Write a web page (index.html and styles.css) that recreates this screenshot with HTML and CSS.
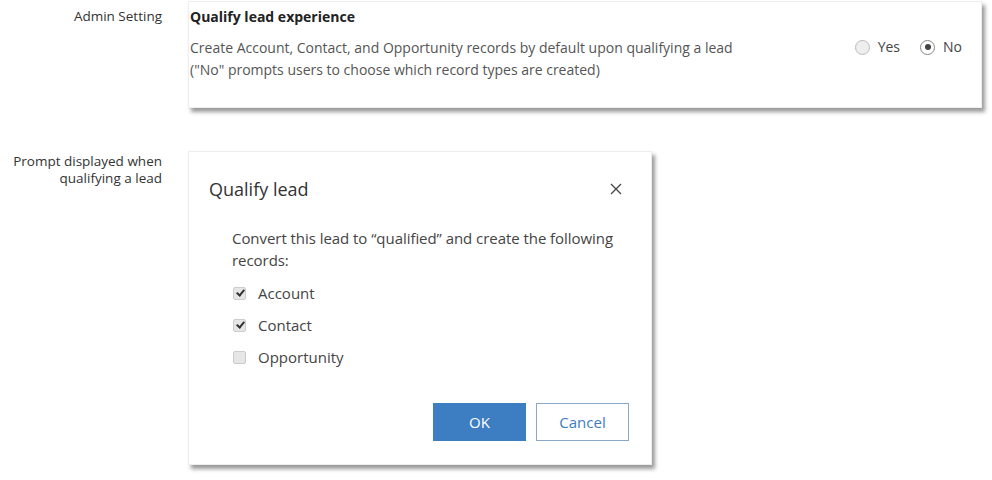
FILE: index.html
```html
<!DOCTYPE html>
<html lang="en">
  <head>
    <meta charset="UTF-8" />
    <title>Qualify lead experience</title>
    <link rel="stylesheet" href="styles.css">
  </head>
  <body>
    <div class="row row-setting">
      <div class="side-label">Admin Setting</div>
      <div class="card setting-card">
        <h3 class="setting-title">Qualify lead experience</h3>
        <div class="setting-body">
          <p class="setting-text">
            Create Account, Contact, and Opportunity records by default upon qualifying a lead<br />
            ("No" prompts users to choose which record types are created)
          </p>
          <div class="radios">
            <label class="radio"><span class="dot"></span>Yes</label>
            <label class="radio on"><span class="dot"></span>No</label>
          </div>
        </div>
      </div>
    </div>

    <div class="row row-prompt">
      <div class="side-label">
        <div>Prompt displayed when</div>
        <div>qualifying a lead</div>
      </div>
      <div class="card dialog">
        <div class="dialog-head">
          <h2 class="dialog-title">Qualify lead</h2>
          <svg class="close" width="12" height="12" viewBox="0 0 12 12">
            <path d="M1 1 L11 11 M11 1 L1 11" stroke="#444" stroke-width="1.3" fill="none" />
          </svg>
        </div>
        <div class="dialog-body">
          <p class="dialog-text">Convert this lead to “qualified” and create the following records:</p>
          <label class="check on"><span class="box"></span>Account</label>
          <label class="check on"><span class="box"></span>Contact</label>
          <label class="check"><span class="box"></span>Opportunity</label>
        </div>
        <div class="dialog-foot">
          <button class="btn btn-ok">OK</button>
          <button class="btn btn-cancel">Cancel</button>
        </div>
      </div>
    </div>
  </body>
</html>
```

FILE: styles.css
```css
body {
  margin: 0;
  padding-bottom: 12px;
  background: #fff;
  font-family: "Open Sans", "Noto Sans", Arial, sans-serif;
  color: #333;
}
.row {
  display: flex;
  align-items: flex-start;
}
.row-setting {
  padding-top: 1px;
}
.row-prompt {
  margin-top: 43px;
}
.side-label {
  width: 162px;
  flex: none;
  text-align: right;
  font-size: 13.5px;
  line-height: 17px;
  color: #333;
  margin-right: 26px;
}
.row-setting .side-label {
  padding-top: 7px;
}
.row-prompt .side-label {
  padding-top: 2px;
}
.card {
  background: #fff;
  border: 1px solid #eee;
  box-shadow: 3px 4px 4px rgba(0, 0, 0, 0.4);
}
.setting-card {
  width: 794px;
  height: 107px;
  box-sizing: border-box;
  padding: 5px 0 0 1px;
}
.setting-title {
  margin: 0;
  font-size: 14px;
  font-weight: 700;
  line-height: 20px;
  color: #222;
}
.setting-body {
  display: flex;
  align-items: flex-start;
  margin-top: 10px;
}
.setting-text {
  margin: 0;
  flex: 1;
  font-size: 14px;
  line-height: 22px;
  color: #555;
}
.radios {
  display: flex;
  gap: 20px;
  padding-right: 19px;
  font-size: 14px;
  line-height: 20px;
  color: #444;
}
.radio {
  display: flex;
  align-items: center;
  gap: 8px;
}
.dot {
  width: 15px;
  height: 15px;
  box-sizing: border-box;
  border: 1px solid #bbb;
  border-radius: 50%;
  background: #eee;
  position: relative;
}
.radio.on .dot {
  background: #fff;
  border-color: #888;
}
.radio.on .dot::after {
  content: "";
  position: absolute;
  left: 3.5px;
  top: 3.5px;
  width: 6px;
  height: 6px;
  border-radius: 50%;
  background: #444;
}
.dialog {
  width: 464px;
  height: 314px;
  box-sizing: border-box;
  display: flex;
  flex-direction: column;
}
.dialog-head {
  display: flex;
  align-items: center;
  justify-content: space-between;
  padding: 23px 29px 0 20px;
}
.dialog-title {
  margin: 0;
  font-size: 18px;
  font-weight: 400;
  line-height: 28px;
  color: #333;
}
.dialog-body {
  padding: 24px 20px 0 43px;
}
.dialog-text {
  margin: 0 0 6px;
  font-size: 15px;
  line-height: 22px;
  color: #444;
  letter-spacing: -0.05px;
}
.check {
  display: flex;
  align-items: center;
  gap: 12px;
  font-size: 15px;
  line-height: 22px;
  color: #444;
  height: 32px;
  padding-left: 1px;
}
.box {
  width: 13px;
  height: 13px;
  box-sizing: border-box;
  border: 1px solid #ccc;
  border-radius: 2px;
  background: #e6e6e6;
  position: relative;
}
.check.on .box::after {
  content: "";
  position: absolute;
  left: 3.5px;
  top: 0.5px;
  width: 3px;
  height: 6px;
  border: solid #333;
  border-width: 0 2px 2px 0;
  transform: rotate(40deg);
}
.dialog-foot {
  margin-top: auto;
  display: flex;
  justify-content: flex-end;
  gap: 10px;
  padding: 0 22px 23px 0;
}
.btn {
  width: 93px;
  height: 38px;
  font-family: inherit;
  font-size: 15px;
  box-sizing: border-box;
}
.btn-ok {
  background: #3d7dc1;
  color: #fff;
  border: 1px solid #3d7dc1;
}
.btn-cancel {
  background: #fff;
  color: #3d7dc1;
  border: 1px solid #8aa9c9;
}
```
